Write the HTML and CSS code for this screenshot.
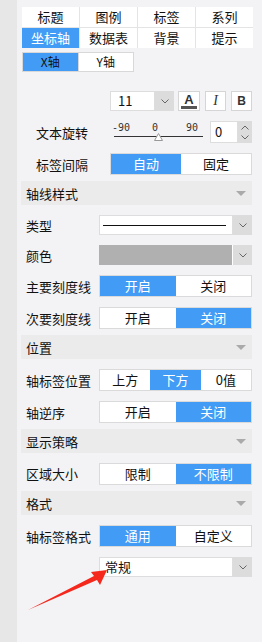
FILE: index.html
```html
<!DOCTYPE html>
<html lang="zh-CN">
<head>
    <meta charset="UTF-8">
    <meta name="viewport" content="width=device-width, initial-scale=1.0">
    <title>坐标轴设置</title>
    <link rel="stylesheet" href="styles.css">
</head>
<body>
    <div class="page">
        <div class="side"></div>
        <div class="panel">
            <div class="tabs">
                <div class="tab">标题</div>
                <div class="tab">图例</div>
                <div class="tab">标签</div>
                <div class="tab">系列</div>
                <div class="tab active">坐标轴</div>
                <div class="tab">数据表</div>
                <div class="tab">背景</div>
                <div class="tab">提示</div>
            </div>

            <div class="axis-switch">
                <div class="axis active">X轴</div>
                <div class="axis">Y轴</div>
            </div>

            <div class="font-row">
                <div class="select size-select">
                    <span class="value">11</span>
                    <span class="drop"><svg width="8" height="5" viewBox="0 0 8 5"><polyline points="0.5,0.5 4,4 7.5,0.5" fill="none" stroke="#666" stroke-width="1"/></svg></span>
                </div>
                <div class="icon-btn color-btn">
                    <span class="letter">A</span>
                    <span class="bar"></span>
                </div>
                <div class="icon-btn italic-btn">I</div>
                <div class="icon-btn bold-btn">B</div>
            </div>

            <div class="row inner rotate-row">
                <span class="label">文本旋转</span>
                <div class="slider">
                    <div class="scale">
                        <span class="tick left">-90</span>
                        <span class="tick mid">0</span>
                        <span class="tick right">90</span>
                    </div>
                    <div class="track">
                        <svg class="thumb" width="9" height="8" viewBox="0 0 9 8"><polygon points="4.5,0.5 8.5,7.5 0.5,7.5" fill="#fff" stroke="#999" stroke-width="1"/></svg>
                    </div>
                </div>
                <div class="spin">
                    <span class="spin-value">0</span>
                    <span class="spin-btns">
                        <svg width="8" height="5" viewBox="0 0 8 5"><polyline points="0.5,4.5 4,1 7.5,4.5" fill="none" stroke="#666" stroke-width="1"/></svg>
                        <svg width="8" height="5" viewBox="0 0 8 5"><polyline points="0.5,0.5 4,4 7.5,0.5" fill="none" stroke="#666" stroke-width="1"/></svg>
                    </span>
                </div>
            </div>

            <div class="row inner">
                <span class="label">标签间隔</span>
                <div class="toggle">
                    <span class="opt active">自动</span>
                    <span class="opt">固定</span>
                </div>
            </div>

            <div class="section-head">轴线样式<i class="caret"></i></div>

            <div class="row">
                <span class="label">类型</span>
                <div class="select">
                    <span class="value line-value"><i class="line"></i></span>
                    <span class="drop"><svg width="8" height="5" viewBox="0 0 8 5"><polyline points="0.5,0.5 4,4 7.5,0.5" fill="none" stroke="#666" stroke-width="1"/></svg></span>
                </div>
            </div>

            <div class="row">
                <span class="label">颜色</span>
                <div class="select color-select">
                    <span class="value color-value"></span>
                    <span class="drop"><svg width="8" height="5" viewBox="0 0 8 5"><polyline points="0.5,0.5 4,4 7.5,0.5" fill="none" stroke="#666" stroke-width="1"/></svg></span>
                </div>
            </div>

            <div class="row">
                <span class="label">主要刻度线</span>
                <div class="toggle">
                    <span class="opt active">开启</span>
                    <span class="opt">关闭</span>
                </div>
            </div>

            <div class="row">
                <span class="label">次要刻度线</span>
                <div class="toggle">
                    <span class="opt">开启</span>
                    <span class="opt active">关闭</span>
                </div>
            </div>

            <div class="section-head">位置<i class="caret"></i></div>

            <div class="row">
                <span class="label">轴标签位置</span>
                <div class="toggle">
                    <span class="opt">上方</span>
                    <span class="opt active">下方</span>
                    <span class="opt">0值</span>
                </div>
            </div>

            <div class="row">
                <span class="label">轴逆序</span>
                <div class="toggle">
                    <span class="opt">开启</span>
                    <span class="opt active">关闭</span>
                </div>
            </div>

            <div class="section-head">显示策略<i class="caret"></i></div>

            <div class="row">
                <span class="label label-up">区域大小</span>
                <div class="toggle">
                    <span class="opt">限制</span>
                    <span class="opt active">不限制</span>
                </div>
            </div>

            <div class="section-head">格式<i class="caret"></i></div>

            <div class="row">
                <span class="label">轴标签格式</span>
                <div class="toggle">
                    <span class="opt active">通用</span>
                    <span class="opt">自定义</span>
                </div>
            </div>

            <div class="row">
                <span class="label"></span>
                <div class="select">
                    <span class="value format-value">常规</span>
                    <span class="drop"><svg width="8" height="5" viewBox="0 0 8 5"><polyline points="0.5,0.5 4,4 7.5,0.5" fill="none" stroke="#666" stroke-width="1"/></svg></span>
                </div>
            </div>
        </div>
    </div>

    <!-- annotation arrow drawn over the panel -->
    <svg class="pointer" width="262" height="642" viewBox="0 0 262 642">
        <polygon points="28,610 97,580 100,585 107,570 91,572 94,576" fill="#f5281e"/>
    </svg>
</body>
</html>
```

FILE: styles.css
```css
body {
    margin: 0;
    font-family: "Noto Sans CJK SC", "Liberation Sans", sans-serif;
    font-size: 13px;
    color: #111;
    background-color: #f3f3f5;
}
.page {
    display: flex;
    min-height: 642px;
}
.side {
    width: 17px;
    background-color: #e7e7e7;
}
.panel {
    flex: 1;
    padding: 7px 10px 0 4px;
}

/* tabs */
.tabs {
    display: grid;
    grid-template-columns: repeat(4, 1fr);
    gap: 1px;
    background-color: #e4e4e4;
    margin: 0 -1px 0 1px;
}
.tab {
    height: 20px;
    line-height: 20px;
    text-align: center;
    background-color: #fff;
}
.tab.active {
    background-color: #429bf5;
    color: #fff;
}

.axis-switch {
    display: flex;
    width: 112px;
    margin: 4px 0 0 1px;
}
.axis {
    flex: 1;
    height: 20px;
    line-height: 18px;
    box-sizing: border-box;
    border: 1px solid #d8d8d8;
    background-color: #fff;
    text-align: center;
    font-size: 12px;
}
.axis + .axis {
    margin-left: -1px;
}
.axis.active {
    background-color: #429bf5;
}

/* font row */
.font-row {
    display: flex;
    height: 20px;
    margin-top: 19px;
    padding-left: 89px;
}
.size-select {
    width: 61px;
    flex: none;
}
.size-select .value {
    padding-left: 7px;
}
.icon-btn {
    width: 21px;
    height: 20px;
    box-sizing: border-box;
    border: 1px solid #d5d5d5;
    background-color: #fff;
    display: flex;
    align-items: center;
    justify-content: center;
    margin-left: 5px;
    color: #333;
}
.color-btn {
    width: 22px;
    margin-left: 4px;
    flex-direction: column;
}
.color-btn .letter {
    font-family: "Liberation Sans", sans-serif;
    font-weight: bold;
    font-size: 13px;
    line-height: 11px;
}
.color-btn .bar {
    width: 16px;
    height: 3px;
    margin-top: 1px;
    background-color: #555;
}
.italic-btn {
    font-family: "Liberation Serif", serif;
    font-style: italic;
    font-size: 14px;
}
.bold-btn {
    font-family: "Liberation Sans", sans-serif;
    font-weight: bold;
    font-size: 12px;
}

/* rows */
.row {
    display: flex;
    align-items: center;
    margin-top: 10px;
}
.label {
    width: 78px;
    flex: none;
    padding-left: 5px;
    box-sizing: border-box;
    white-space: nowrap;
}
.label-up {
    position: relative;
    top: -1px;
}
.row.inner .label {
    width: 89px;
    padding-left: 15px;
}
.rotate-row {
    height: 22px;
}

/* slider */
.slider {
    width: 93px;
    height: 22px;
    flex: none;
}
.scale {
    display: flex;
    margin: 2px -2px 0 2px;
    font-family: "DejaVu Sans Mono", monospace;
    font-size: 10px;
    line-height: 9px;
    color: #333;
}
.tick {
    flex: 1;
}
.tick.mid {
    text-align: center;
}
.tick.right {
    text-align: right;
    padding-right: 7px;
}
.track {
    position: relative;
    height: 1px;
    margin: 4px 0 0 4px;
    background-color: #333;
}
.thumb {
    position: absolute;
    left: calc(50% - 4.5px);
    top: -3px;
}

.spin {
    display: flex;
    width: 42px;
    height: 22px;
    margin-left: 7px;
}
.spin-value {
    flex: 1;
    box-sizing: border-box;
    border: 1px solid #ddd;
    background-color: #fff;
    line-height: 20px;
    padding-left: 4px;
}
.spin-btns {
    width: 14px;
    background-color: #dcdcdc;
    display: flex;
    flex-direction: column;
    align-items: center;
    justify-content: center;
    gap: 5px;
}

/* toggles */
.toggle {
    flex: 1;
    display: flex;
    height: 22px;
    box-sizing: border-box;
    border: 1px solid #dadada;
    background-color: #fff;
}
.opt {
    flex: 1;
    text-align: center;
    line-height: 20px;
}
.opt.active {
    background-color: #429bf5;
    color: #fff;
}

/* selects */
.select {
    flex: 1;
    display: flex;
    height: 20px;
}
.select .value {
    flex: 1;
    box-sizing: border-box;
    border: 1px solid #ddd;
    background-color: #fff;
    line-height: 18px;
}
.select .drop {
    width: 19px;
    background-color: #dcdcdc;
    display: flex;
    align-items: center;
    justify-content: center;
}
.line-value {
    display: flex;
    align-items: center;
    padding: 0 6px 0 3px;
}
.line-value .line {
    flex: 1;
    height: 1px;
    background-color: #111;
}
.color-select .color-value {
    background-color: #b0b0b0;
    border: none;
}
.color-select .drop {
    border-left: 1px solid #fff;
}
.format-value {
    padding-left: 5px;
}

/* section headers */
.section-head {
    display: flex;
    align-items: center;
    justify-content: space-between;
    height: 24px;
    margin-top: 6px;
    padding: 0 6px 0 5px;
    background-color: #ebebeb;
}
.caret {
    width: 0;
    height: 0;
    border-left: 5px solid transparent;
    border-right: 5px solid transparent;
    border-top: 5px solid #aaa;
}

.pointer {
    position: absolute;
    top: 0;
    left: 0;
    pointer-events: none;
}
```
